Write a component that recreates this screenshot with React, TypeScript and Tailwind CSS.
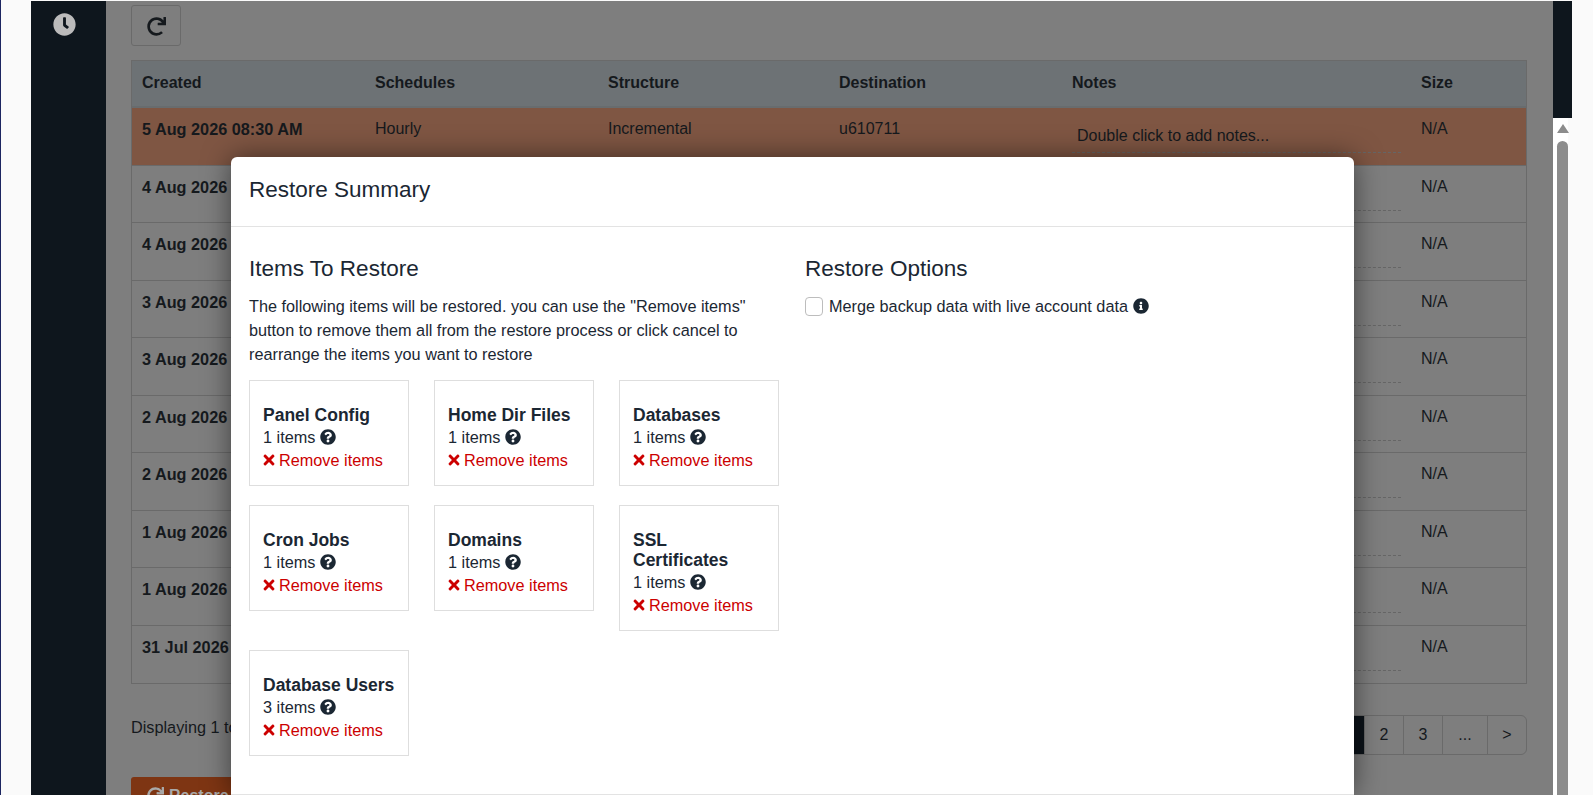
import { FaClock, FaInfoCircle, FaQuestionCircle, FaRedo, FaTimes } from 'react-icons/fa';

const dates = [
  '5 Aug 2026 08:30 AM',
  '4 Aug 2026 08:30 PM',
  '4 Aug 2026 08:30 AM',
  '3 Aug 2026 08:30 PM',
  '3 Aug 2026 08:30 AM',
  '2 Aug 2026 08:30 PM',
  '2 Aug 2026 08:30 AM',
  '1 Aug 2026 08:30 PM',
  '1 Aug 2026 08:30 AM',
  '31 Jul 2026 08:30 PM',
];

const items = [
  { name: 'Panel Config', count: 1 },
  { name: 'Home Dir Files', count: 1 },
  { name: 'Databases', count: 1 },
  { name: 'Cron Jobs', count: 1 },
  { name: 'Domains', count: 1 },
  { name: 'SSL Certificates', count: 1 },
  { name: 'Database Users', count: 3 },
];

const pages = [
  { label: '1', className: 'w-[40px] bg-[#0c1319] text-white' },
  { label: '2', className: 'w-[39px] border-l border-[#6a6a6a]' },
  { label: '3', className: 'w-[39px] border-l border-[#6a6a6a]' },
  { label: '...', className: 'w-[45px] border-l border-[#6a6a6a]' },
  { label: '>', className: 'w-[39px] border-l border-[#6a6a6a]' },
];

function BackupRow({ date, active }: { date: string; active: boolean }) {
  return (
    <div
      className={`flex h-[57.5px] border-b border-[#6a6a6a] pt-[9px] last:border-b-0 ${
        active ? 'bg-[#7f5643]' : ''
      }`}
    >
      <div className="w-[233px] pl-[10px] text-[16.25px] font-bold">{date}</div>
      <div className="w-[233px] pl-[10px]">Hourly</div>
      <div className="w-[231px] pl-[10px]">Incremental</div>
      <div className="w-[233px] pl-[10px]">u610711</div>
      <div className="w-[349px] pl-[10px]">
        <div className="h-[36px] w-[329px] border-b border-dashed border-[#666] pt-[7px] pl-[5px]">
          Double click to add notes...
        </div>
      </div>
      <div className="pl-[10px]">N/A</div>
    </div>
  );
}

function ItemCard({ name, count }: { name: string; count: number }) {
  return (
    <div className="border border-[#dedede] pt-[24px] pr-[12px] pb-[14px] pl-[13px]">
      <div className="text-[17.5px] leading-[20px] font-bold">{name}</div>
      <div className="flex h-[23px] items-center gap-[5px]">
        {count} items <FaQuestionCircle className="text-[16px]" />
      </div>
      <div className="flex h-[23px] items-center text-[#cc0000]">
        <FaTimes className="-ml-[2px] mr-[2px] text-[16px]" /> Remove items
      </div>
    </div>
  );
}

export default function App() {
  return (
    <div className="relative flex h-screen overflow-hidden bg-[#fafafa] font-['Liberation_Sans',Arial,sans-serif] text-[16px] leading-[24px] text-[#1b2733]">
      {/* left gutter */}
      <div className="w-[31px] shrink-0 border-l border-[#1c2560]" />

      {/* sidebar */}
      <div className="mt-px w-[75px] shrink-0 bg-[#0e161d] pt-[12px] pl-[22px]">
        <FaClock className="text-[23px] text-[#bbbbbb]" />
      </div>

      {/* page behind the backdrop */}
      <main className="mt-px w-[1447px] shrink-0 bg-[#7e7e7e] pt-[4px] pl-[25px] text-[#15191d]">
        <button className="flex h-[41px] w-[50px] items-center justify-center rounded-[3px] border border-[#6a6a6a] pt-[1px]">
          <FaRedo className="text-[19px]" />
        </button>

        <div className="mt-[14px] w-[1396px] border border-[#6a6a6a]">
          <div className="flex h-[47px] items-center border-b-2 border-[#686c6e] bg-[#6d7275] pb-[2px] font-bold">
            <div className="w-[233px] pl-[10px]">Created</div>
            <div className="w-[233px] pl-[10px]">Schedules</div>
            <div className="w-[231px] pl-[10px]">Structure</div>
            <div className="w-[233px] pl-[10px]">Destination</div>
            <div className="w-[349px] pl-[10px]">Notes</div>
            <div className="pl-[10px]">Size</div>
          </div>
          {dates.map((date, i) => (
            <BackupRow key={date} date={date} active={i === 0} />
          ))}
        </div>

        <div className="mt-[31px] flex h-[40px] w-[1396px] items-center justify-between">
          <span className="-mt-[16px] text-[16.25px]">Displaying 1 to 10 of 72 results</span>
          <div className="flex h-full overflow-hidden rounded-[6px] border border-[#6a6a6a]">
            {pages.map((p) => (
              <div key={p.label} className={`flex items-center justify-center ${p.className}`}>
                {p.label}
              </div>
            ))}
          </div>
        </div>

        <button className="mt-[22px] flex h-[40px] w-[130px] items-start gap-[5px] rounded-[3px] bg-[#7e3513] px-[16px] pt-[7px] font-bold text-[#a9a9a9]">
          <FaRedo className="mt-[3px] text-[17px]" /> Restore
        </button>
      </main>

      {/* right strip + scrollbar */}
      <div className="w-[19px] shrink-0">
        <div className="mt-px h-[117px] bg-[#0e161d]" />
        <div className="h-[677px] w-[15px] bg-white pl-[4px]">
          <div className="flex h-full w-[11px] flex-col items-center">
            <div className="mt-[6px] h-0 w-0 shrink-0 border-x-[6.5px] border-b-[9px] border-x-transparent border-b-[#8c8c8c]" />
            <div className="mt-[8px] w-[11px] flex-1 rounded-t-[6px] bg-[#8c8c8c]" />
          </div>
        </div>
      </div>

      {/* modal */}
      <div className="absolute top-[157px] left-[231px] h-[638px] w-[1123px] rounded-t-[6px] border-b border-[#e3e3e3] bg-white text-[16.25px] shadow-[0_0_28px_rgba(0,0,0,0.5)]">
        <div className="flex h-[70px] items-center border-b border-[#e3e3e3] px-[18px] pb-[3px] text-[22.5px] leading-[28px]">
          Restore Summary
        </div>
        <div className="grid grid-cols-2 gap-x-[25px] px-[18px] pt-[29px]">
          <div>
            <h4 className="text-[22.5px] leading-[26px]">Items To Restore</h4>
            <p className="mt-[12px]">
              The following items will be restored. you can use the "Remove items" button to remove
              them all from the restore process or click cancel to rearrange the items you want to
              restore
            </p>
            <div className="mt-[14px] grid w-[530px] grid-cols-[160px_160px_160px] items-start gap-x-[25px] gap-y-[19px]">
              {items.map((item) => (
                <ItemCard key={item.name} name={item.name} count={item.count} />
              ))}
            </div>
          </div>
          <div>
            <h4 className="text-[22.5px] leading-[26px]">Restore Options</h4>
            <label className="mt-[12px] flex items-center gap-[6px]">
              <span className="h-[19px] w-[18px] rounded-[4px] border border-[#bdbdbd]" />
              Merge backup data with live account data
              <FaInfoCircle className="-ml-px text-[16px]" />
            </label>
          </div>
        </div>
      </div>
    </div>
  );
}
